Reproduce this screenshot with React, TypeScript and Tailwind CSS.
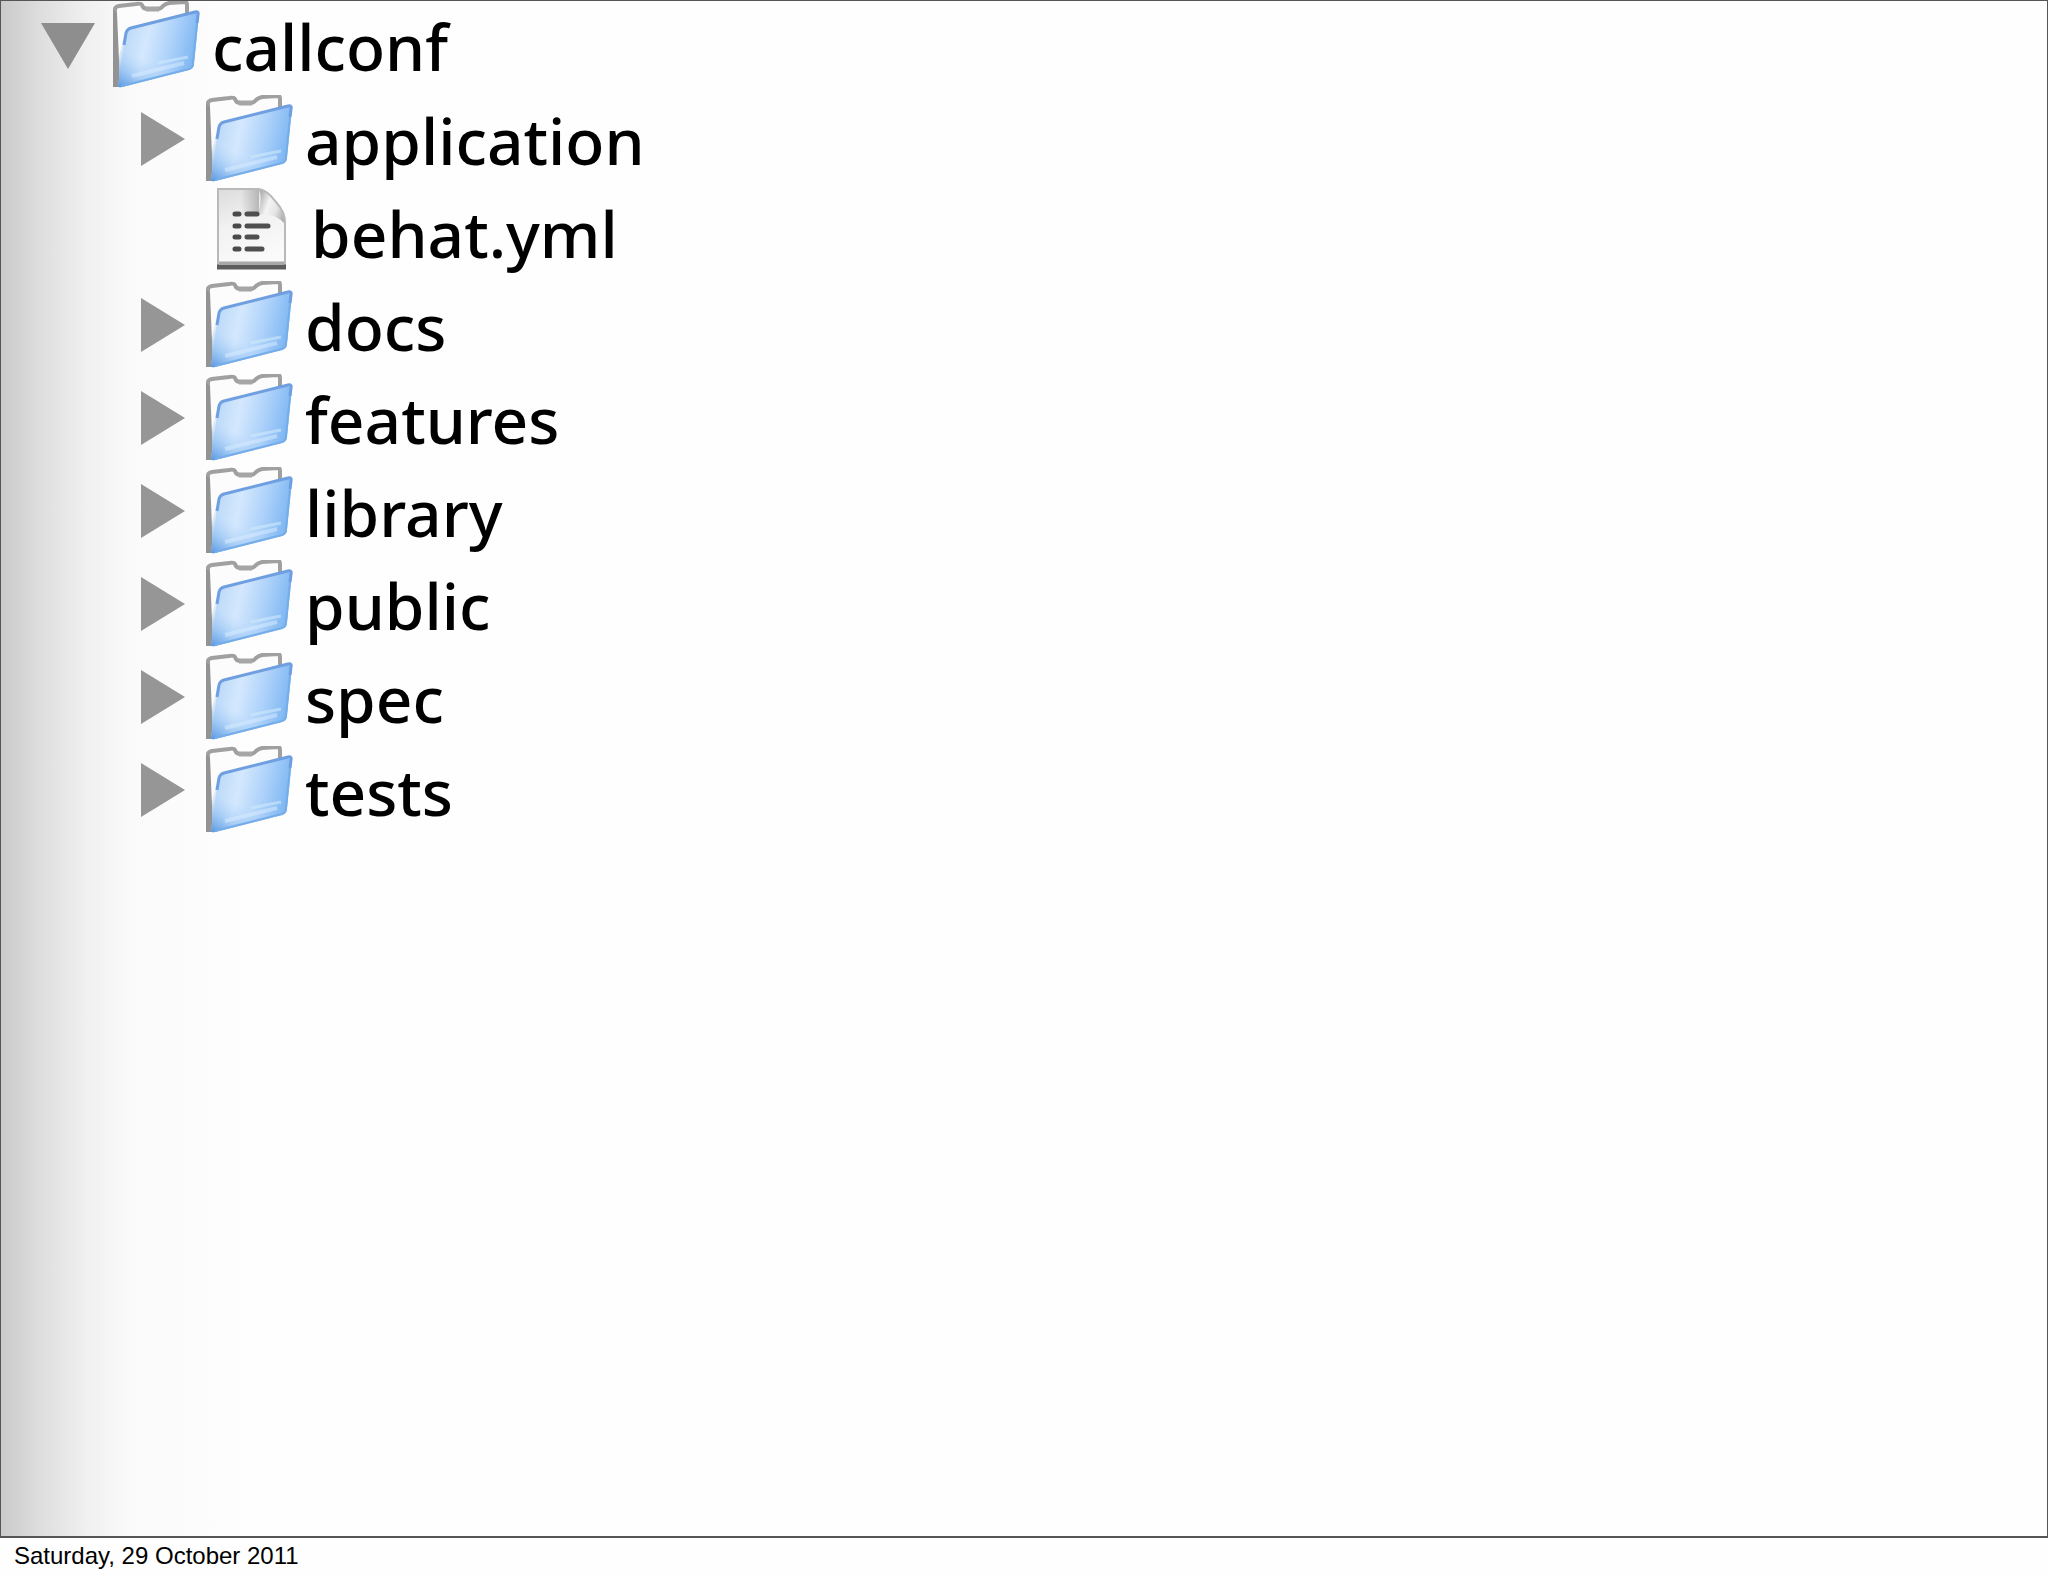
type Entry = {
  name: string;
  kind: "folder" | "file";
};

const root = "callconf";

const entries: Entry[] = [
  { name: "application", kind: "folder" },
  { name: "behat.yml", kind: "file" },
  { name: "docs", kind: "folder" },
  { name: "features", kind: "folder" },
  { name: "library", kind: "folder" },
  { name: "public", kind: "folder" },
  { name: "spec", kind: "folder" },
  { name: "tests", kind: "folder" },
];

// gradients shared by every folder and file icon
function IconDefs() {
  return (
    <svg className="absolute size-0" aria-hidden="true">
      <defs>
        <linearGradient id="folder-front" x1="0" y1="0.3" x2="1" y2="0.5">
          <stop offset="0" stopColor="#b4d5f8" />
          <stop offset="0.35" stopColor="#d4e8fd" />
          <stop offset="0.65" stopColor="#aed2fa" />
          <stop offset="1" stopColor="#78b3f1" />
        </linearGradient>
        <linearGradient id="folder-corner" x1="0" y1="1" x2="0.4" y2="0.3">
          <stop offset="0" stopColor="#4a8ddc" stopOpacity="0.9" />
          <stop offset="0.3" stopColor="#6fabec" stopOpacity="0.4" />
          <stop offset="0.6" stopColor="#9cc8f8" stopOpacity="0" />
        </linearGradient>
        <linearGradient id="folder-side" x1="0" y1="0" x2="0" y2="1">
          <stop offset="0" stopColor="#fcfcfc" />
          <stop offset="0.5" stopColor="#d3e3f3" />
          <stop offset="1" stopColor="#5f9bdc" />
        </linearGradient>
        <linearGradient id="file-page" x1="0" y1="0" x2="0.3" y2="1">
          <stop offset="0" stopColor="#dcdcdc" />
          <stop offset="0.5" stopColor="#f2f2f2" />
          <stop offset="1" stopColor="#fafafa" />
        </linearGradient>
        <linearGradient id="file-fold" x1="0" y1="0.2" x2="1" y2="0.7">
          <stop offset="0" stopColor="#a8a8a8" />
          <stop offset="0.4" stopColor="#f4f4f4" />
          <stop offset="0.7" stopColor="#e4e4e4" />
          <stop offset="1" stopColor="#b0b0b0" />
        </linearGradient>
        <linearGradient id="file-shade" x1="0" y1="0" x2="1" y2="0">
          <stop offset="0" stopColor="#a0a0a0" stopOpacity="0" />
          <stop offset="1" stopColor="#a0a0a0" />
        </linearGradient>
      </defs>
    </svg>
  );
}

function FolderIcon() {
  return (
    <svg viewBox="0 0 88 88" className="size-22 shrink-0" aria-hidden="true">
      <path
        d="M2 85V8Q2 5 6 4L24 1Q29 0 30 3Q31 8 36 8H45Q49 8 51 4Q53 2 57 1L73 0Q76 0 76 4V20L18 28L12 85Z"
        fill="#fcfcfc"
      />
      <path d="M6 84V60L13 30L20 28L14 85Z" fill="url(#folder-side)" />
      <path
        d="M3 40V8Q3 6 7 5L24 3Q29 2 30 4Q31 8 36 8H45Q49 8 51 5Q53 3 57 2L73 1Q75 1 75 4V13"
        fill="none"
        stroke="#a0a0a0"
        strokeWidth="4"
      />
      <path d="M34 8H47" stroke="#a6a6a6" strokeWidth="5" />
      <path d="M1 9V86H7V60L5 12Z" fill="#939393" />
      <path
        d="M18 27Q14 28 13 33L6 85Q6 87 10 86L77 69Q82 67 82 63L87 14Q87 10 83 11Z"
        fill="url(#folder-front)"
      />
      <path
        d="M18 27Q14 28 13 33L6 85Q6 87 10 86L77 69Q82 67 82 63L87 14Q87 10 83 11Z"
        fill="url(#folder-corner)"
      />
      <path
        d="M12 44L14 32Q15 28 19 27L83 11Q87 10 86 14L85 22"
        fill="none"
        stroke="#6f9fe0"
        strokeWidth="3"
      />
      <path
        d="M85 22L81 62Q81 67 77 68L10 85"
        fill="none"
        stroke="#74ade9"
        strokeWidth="2"
      />
      <path d="M20 75L72 62" fill="none" stroke="#dceeff" strokeWidth="4" opacity="0.5" />
      <path d="M46 62L76 56" fill="none" stroke="#cfe9fb" strokeWidth="3" opacity="0.6" />
    </svg>
  );
}

function FileIcon() {
  return (
    <svg viewBox="0 0 94 88" className="h-22 w-[94px] shrink-0" aria-hidden="true">
      <path d="M13 1H54Q62 2 71 14Q80 24 80 34V79H13Z" fill="url(#file-page)" />
      <path d="M36 2H54V27H36Z" fill="url(#file-shade)" opacity="0.7" />
      <path d="M54 1Q58 10 53 27Q70 24 80 36Q80 24 71 14Q62 3 54 1Z" fill="url(#file-fold)" />
      <path
        d="M13 78V1H54Q62 2 71 14Q80 24 80 34V78"
        fill="none"
        stroke="#b9b9b9"
        strokeWidth="2"
      />
      <path d="M12 79H81" stroke="#5d5d5d" strokeWidth="5" />
      <path d="M14 75H79" stroke="#a8a8a8" strokeWidth="3" />
      <path
        d="M30 26H34M30 38H34M30 49H34M30 61H34"
        stroke="#4a4a4a"
        strokeWidth="5"
        strokeLinecap="round"
      />
      <path
        d="M42 26H52M42 38H63M42 49H52M42 61H57"
        stroke="#4f4f4f"
        strokeWidth="5"
        strokeLinecap="round"
      />
    </svg>
  );
}

function Disclosure({ name, open = false }: { name: string; open?: boolean }) {
  return (
    <button
      type="button"
      aria-label={name}
      aria-expanded={open}
      className="flex h-22 w-14 shrink-0 items-center justify-center"
    >
      <svg viewBox="0 0 56 56" className="size-14" aria-hidden="true">
        {open ? (
          <path d="M0 6H54L27 52Z" fill="#8e8e8e" />
        ) : (
          <path d="M7 1V55L51 28Z" fill="#969696" />
        )}
      </svg>
    </button>
  );
}

function Row({ name, kind, open }: Entry & { open?: boolean }) {
  return (
    <div className="flex h-[93px] items-start">
      {kind === "folder" ? (
        <Disclosure name={name} open={open} />
      ) : (
        <span className="w-14 shrink-0" />
      )}
      <div className="flex gap-3 pl-[15px]">
        {kind === "folder" ? <FolderIcon /> : <FileIcon />}
        <span className="text-[64px] leading-[92px] font-medium whitespace-nowrap">{name}</span>
      </div>
    </div>
  );
}

export default function App() {
  return (
    <div className="flex min-h-screen flex-col bg-[#fefefe] text-black">
      <IconDefs />
      <main className="flex-1 border border-b-2 border-[#555555] bg-[linear-gradient(to_right,#cacaca,#dedede_40px,#f0f0f0_85px,#fafafa_130px,#fefefe_250px)] pl-10 font-['Noto_Sans','Open_Sans',sans-serif]">
        <Row name={root} kind="folder" open />
        <ul className="pt-px pl-[93px]">
          {entries.map((entry) => (
            <li key={entry.name}>
              <Row {...entry} />
            </li>
          ))}
        </ul>
      </main>
      <footer className="h-[38px] px-3.5 font-['Liberation_Sans',sans-serif] text-2xl leading-[36px]">
        Saturday, 29 October 2011
      </footer>
    </div>
  );
}
